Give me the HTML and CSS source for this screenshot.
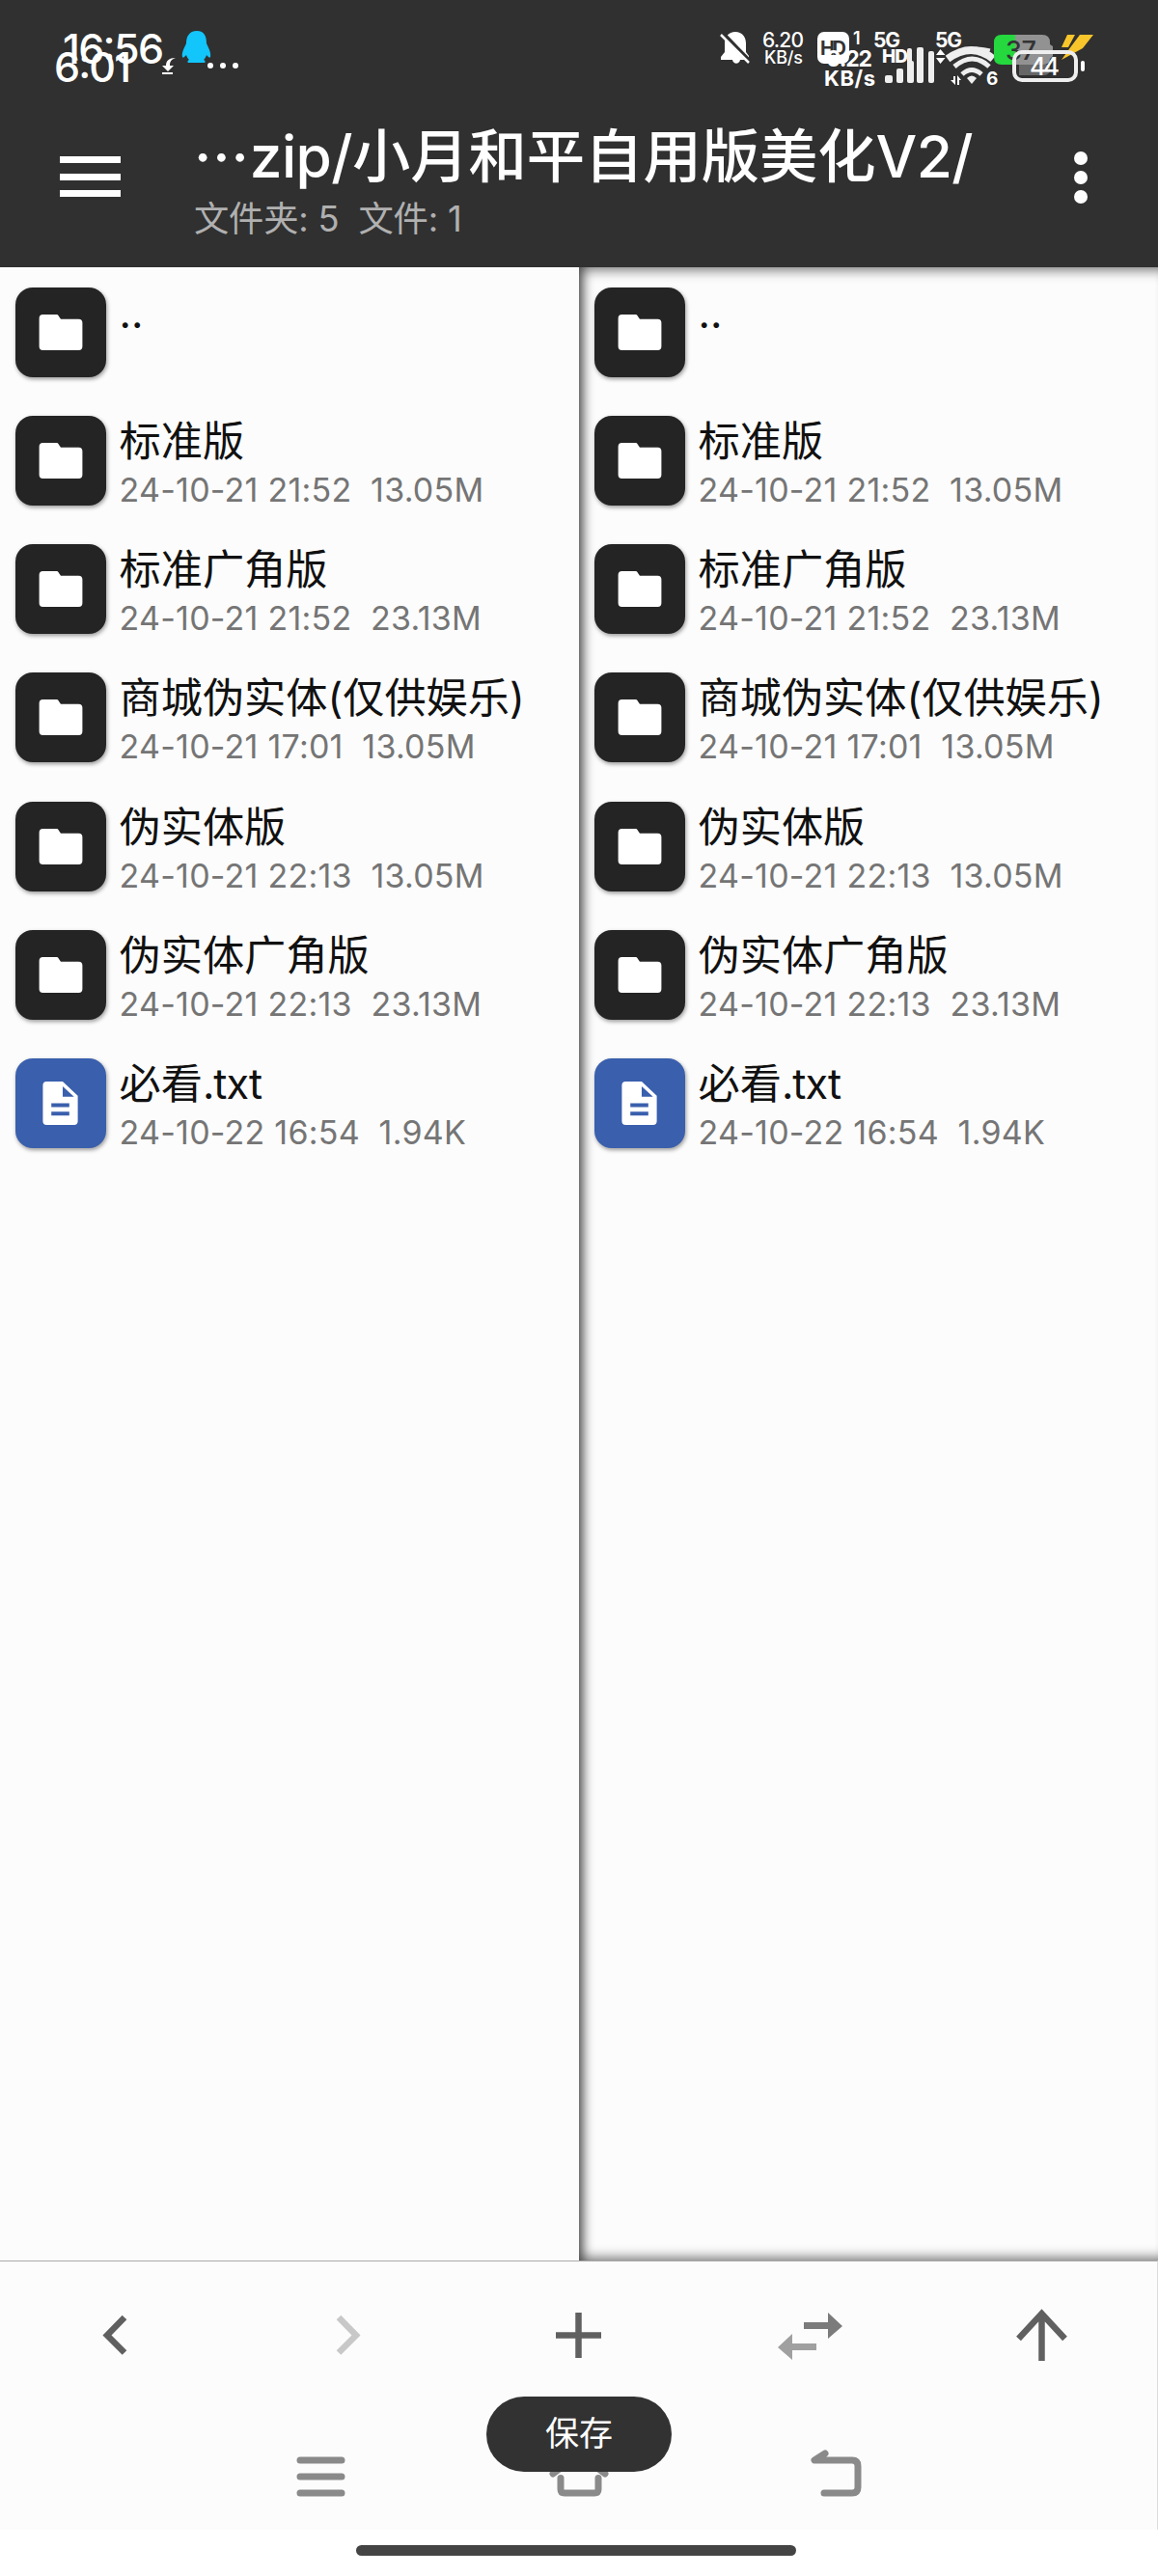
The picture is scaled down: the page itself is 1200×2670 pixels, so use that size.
FILE: index.html
```html
<!DOCTYPE html>
<html lang="zh-CN">
<head>
  <meta charset="utf-8">
  <meta name="viewport" content="width=1200">
  <title>文件管理</title>
  <link rel="stylesheet" href="styles.css">
</head>
<body>
<svg class="defs">
  <symbol id="folder" viewBox="0 0 46 38">
    <path d="M4 0h14c2 0 2 .5 3 2l2 3h19q4 0 4 4v25q0 4-4 4H4q-4 0-4-4V4q0-4 4-4z"/>
  </symbol>
  <symbol id="doc" viewBox="0 0 38 46">
    <path fill-rule="evenodd" d="M4 0h17l16 15v27q0 4-4 4H4q-4 0-4-4V4q0-4 4-4zM21 5v11h12zM9 23v4h19v-4zM9 32v4h19v-4z"/>
  </symbol>
</svg>

<header>
  <svg class="status" width="1200" height="110" viewBox="0 0 1200 110">
    <text x="65" y="66" font-size="43" font-weight="500" textLength="105">16:56</text>
    <text x="56" y="84.500" font-size="43" font-weight="500" textLength="80">6:01</text>
    <!-- penguin -->
    <path fill="#12c5fb" d="M204 32c-8 0-11 6-11 13-2 5-5 9-4 14 1 2 3-1 4-2 1 3 2 4 3 5-2 1-2 2-1 3h17c1-1 1-2-1-3 1-1 2-2 3-5 1 1 3 4 4 2 1-5-2-9-4-14 0-7-2-13-10-13z"/>
    <path d="M182 60c-7 0-10 3-10 8h-4l6 6 6-6h-4c0-4 1-6 6-8zM168 75h11v2h-11z"/>
    <circle cx="218" cy="68" r="3"/><circle cx="231" cy="68" r="3"/><circle cx="244" cy="68" r="3"/>
    <!-- muted bell -->
    <path d="M762 33c-7 0-11 5-11 12v9l-4 5v3h12c1 5 7 5 8 0h9v-4l-3-4v-9c0-7-4-12-11-12z"/>
    <path d="M748 34l29 30" fill="none" stroke="#303030" stroke-width="5"/>
    <path d="M747 36l29 29" fill="none" stroke="#fff" stroke-width="2.500"/>
    <text x="790" y="48.500" font-size="21" font-weight="500" textLength="43">6.20</text>
    <text x="792" y="66" font-size="18" font-weight="500" textLength="40">KB/s</text>
    <!-- HD badge -->
    <rect x="847" y="33" width="33" height="33" rx="7"/>
    <text class="dark" x="850" y="57" font-size="20" font-weight="700" textLength="27">HD</text>
    <text x="884" y="46" font-size="18" font-weight="600">1</text>
    <text x="905" y="48.500" font-size="21" font-weight="700" textLength="28">5G</text>
    <text x="856" y="69" font-size="23" font-weight="700" textLength="48">0.22</text>
    <text x="854" y="89" font-size="22" font-weight="700" textLength="53">KB/s</text>
    <text x="914" y="65" font-size="19" font-weight="800" textLength="27">HD</text>
    <g class="soft">
      <rect x="917" y="78" width="8" height="8" rx="2"/><rect x="929" y="71" width="7" height="15" rx="2"/>
      <rect x="940" y="63" width="7" height="23" rx="2"/><rect x="950" y="49" width="7" height="37" rx="2"/>
      <rect x="940" y="50" width="5" height="16" rx="2"/>
      <rect x="962" y="53" width="6" height="33" rx="2"/>
    </g>
    <text x="969" y="49" font-size="21" font-weight="700" textLength="28">5G</text>
    <path d="M970 57l4.500-6 5 6zM970 60h9.500l-5 6z"/>
    <!-- wifi, two copies slightly apart -->
    <g class="line soft">
      <path d="M982 61q25-18 47 0" stroke-width="8"/>
      <path d="M990 55q18-8 36-3" stroke-width="3"/>
      <path d="M989 69q19-16 36 0" stroke-width="5"/>
      <path d="M997 77q10-9 20 0" stroke-width="5"/>
    </g>
    <path class="soft" d="M1002 81q5-5 10 0l-5 6z"/>
    <path d="M990 79v9l-5-5h3v-4zM992 88v-10l4 5h-2v5z"/>
    <text x="1022" y="88" font-size="19" font-weight="700">6</text>
    <!-- charging battery -->
    <path fill="#929292" d="M1052 36h28q8 0 8 8v2l3 2v10l-3 3q0 6-8 6h-28z"/>
    <path fill="#24d83e" d="M1038 36h14v31h-14q-8 0-8-8V44q0-8 8-8z"/>
    <path fill="#666" d="M1056 67h32v5q0 6-7 6h-25z"/>
    <text class="dark" x="1042" y="62" font-size="27" font-weight="500" textLength="32">37</text>
    <path fill="#f8c52b" d="M1106 36h8l-7 13h-7zM1119 36h14l-11 14-22 12 10-14z"/>
    <rect class="line" x="1051" y="54" width="64" height="29" rx="8" stroke-width="4"/>
    <rect x="1120" y="63" width="4" height="11" rx="2"/>
    <text x="1067" y="78" font-size="26" font-weight="500" textLength="31">44</text>
  </svg>
  <div class="toolbar">
    <div class="menu"><i></i><i></i><i></i></div>
    <div class="titles">
      <h1><span class="dots">···</span><span class="zip">zip/</span>小月和平自用版美化<span class="zip">V2/</span></h1>
      <p>文件夹: 5&nbsp; 文件: 1</p>
    </div>
    <div class="more"><i></i><i></i><i></i></div>
  </div>
</header>

<main>
  <ul class="pane" id="left">
    <li><div class="icon"><svg><use href="#folder"/></svg></div><div><b>..</b></div></li>
    <li><div class="icon"><svg><use href="#folder"/></svg></div><div><b>标准版</b><span>24-10-21 21:52 &nbsp;13.05M</span></div></li>
    <li><div class="icon"><svg><use href="#folder"/></svg></div><div><b>标准广角版</b><span>24-10-21 21:52 &nbsp;23.13M</span></div></li>
    <li><div class="icon"><svg><use href="#folder"/></svg></div><div><b>商城伪实体(仅供娱乐)</b><span>24-10-21 17:01 &nbsp;13.05M</span></div></li>
    <li><div class="icon"><svg><use href="#folder"/></svg></div><div><b>伪实体版</b><span>24-10-21 22:13 &nbsp;13.05M</span></div></li>
    <li><div class="icon"><svg><use href="#folder"/></svg></div><div><b>伪实体广角版</b><span>24-10-21 22:13 &nbsp;23.13M</span></div></li>
    <li><div class="icon txt"><svg><use href="#doc"/></svg></div><div><b>必看<em>.txt</em></b><span>24-10-22 16:54 &nbsp;1.94K</span></div></li>
  </ul>
  <ul class="pane" id="right"></ul>
</main>

<footer>
  <div class="actions">
    <svg viewBox="0 0 60 60"><path d="M39 12L21 30.500l18 18"/></svg>
    <svg class="off" viewBox="0 0 60 60"><path d="M21 12l18 18.500-18 18"/></svg>
    <svg viewBox="0 0 60 60"><path d="M30.500 7v47M7 30.500h47"/></svg>
    <svg class="swap" viewBox="0 0 80 60"><path d="M34 17h25V7l15 14-15 13V24H34z"/><path class="pale" d="M47 39H22V29L7 43l15 13V46h25z"/></svg>
    <svg viewBox="0 0 60 60"><path d="M30.500 57V8M6.500 34l24-26 24 26"/></svg>
  </div>
  <div class="nav">
    <svg viewBox="0 0 64 64"><path d="M10 22h43M10 39h43M10 56h43"/></svg>
    <svg viewBox="0 0 64 64"><path d="M5 36L32 16l27 20M13 40.500V52q0 4 4 4h31q4 0 4-4V40.500"/></svg>
    <svg viewBox="0 0 64 64"><path d="M20 15L9 22h39q6 0 6 6v22q0 6-6 6H19"/></svg>
  </div>
  <div class="toast">保存</div>
</footer>
<div class="gesture"><i></i></div>

<script>
  // both panes are showing the same folder
  document.getElementById("right").innerHTML = document.getElementById("left").innerHTML;
</script>
</body>
</html>
```
FILE: styles.css
```css
* {
  box-sizing: border-box;
}
body {
  margin: 0;
  width: 1200px;
  height: 2670px;
  background: #fff;
  font-family: Inter, "Noto Sans CJK SC", sans-serif;
  overflow: hidden;
}
.defs {
  display: none;
}
header {
  height: 277px;
  background: #303030;
  color: #fff;
}
.status {
  display: block;
  fill: #fff;
}
.status .dark {
  fill: #333;
}
.status .soft {
  fill: #eee;
}
.status .line {
  fill: none;
  stroke: #eee;
}
.status .line path {
  fill: none;
}
.toolbar {
  display: flex;
  height: 167px;
  padding-left: 62px;
}
.menu {
  display: flex;
  flex-direction: column;
  gap: 10.500px;
  width: 63px;
  padding-top: 52px;
}
.menu i {
  height: 7px;
  background: #fff;
}
.titles {
  width: 895px;
  padding-left: 76px;
}
h1 {
  margin: 0;
  padding-top: 15px;
  font-size: 60.300px;
  font-weight: 500;
  line-height: 76px;
  white-space: nowrap;
}
h1 .dots {
  letter-spacing: 1px;
}
h1 .zip {
  letter-spacing: -.6px;
}
.titles p {
  margin: 0;
  font-size: 36.300px;
  line-height: 52px;
  letter-spacing: -.2px;
  color: #b0b0b0;
  white-space: nowrap;
}
.more {
  display: flex;
  flex-direction: column;
  gap: 6px;
  padding: 47px 0 0 93px;
}
.more i {
  width: 14px;
  height: 14px;
  border-radius: 50%;
  background: #fff;
}

main {
  display: flex;
  height: 2066px;
}
.pane {
  flex: 1;
  margin: 0;
  padding: 20.500px 0 0 16px;
  list-style: none;
  background: #fcfcfc;
}
#right {
  box-shadow: inset 13px 0 12px -9px #444, inset 0 14px 12px -10px #888, inset 0 -14px 12px -10px #888;
}
.pane li {
  display: flex;
  height: 133.300px;
}
.icon {
  display: flex;
  align-items: center;
  justify-content: center;
  width: 93.500px;
  height: 93px;
  margin-right: 14px;
  border-radius: 18px;
  background: #242424;
  box-shadow: 1px 2px 4px rgba(0, 0, 0, .4);
}
.icon svg {
  width: 46px;
  height: 37px;
  fill: #fff;
}
.icon.txt {
  background: #395fad;
}
.icon.txt svg {
  height: 45px;
}
.pane b {
  display: block;
  font-size: 43.200px;
  font-weight: 400;
  line-height: 52px;
  color: #111;
  white-space: nowrap;
}
.pane em {
  font-style: normal;
  letter-spacing: -1px;
}
.pane span {
  display: block;
  font-size: 34px;
  line-height: 50px;
  letter-spacing: .25px;
  color: #757575;
  white-space: nowrap;
}

footer {
  position: relative;
  height: 279px;
  border-top: 1px solid #aaa;
  border-right: 1px solid #ddd;
  background: #fcfcfc;
}
.actions {
  display: flex;
  justify-content: space-around;
  padding-top: 46px;
}
.actions svg {
  width: 60px;
  height: 60px;
  margin: 0 10px;
  fill: none;
  stroke: #606060;
  stroke-width: 6.500;
}
.actions .off {
  stroke: #c8c8c8;
}
.actions .swap {
  width: 80px;
  margin: 0;
  stroke: none;
  fill: #7b7b7b;
}
.swap .pale {
  fill: #a0a0a0;
}
.nav {
  display: flex;
  justify-content: center;
  gap: 203px;
  padding-top: 78px;
}
.nav svg {
  width: 64px;
  height: 64px;
  fill: none;
  stroke: #8a8a8a;
  stroke-width: 7;
  stroke-linecap: round;
  stroke-linejoin: round;
}
.toast {
  position: absolute;
  left: 504px;
  top: 140px;
  width: 192px;
  height: 78px;
  border-radius: 39px;
  background: #323232;
  color: #fff;
  font-size: 35px;
  line-height: 76px;
  text-align: center;
}
.gesture {
  display: flex;
  justify-content: center;
  padding: 16px 6px 0 0;
}
.gesture i {
  width: 456px;
  height: 11px;
  border-radius: 6px;
  background: #444;
}
```
